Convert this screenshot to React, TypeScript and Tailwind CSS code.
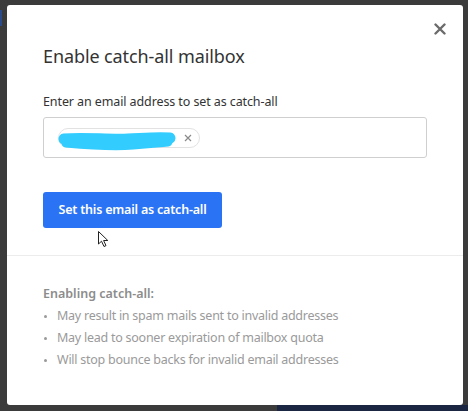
import React from "react";

export default function App() {
  const font = { fontFamily: '"Noto Sans", "Open Sans", sans-serif' };
  return (
    <div className="relative h-[411px] w-[468px] overflow-hidden bg-[#3b3b3b]" style={font}>
      <div className="absolute left-0 top-[10px] h-[16px] w-[2px] bg-[#2a4a8a]" />
      <div className="absolute bottom-0 left-[277px] h-[6px] w-[191px] bg-[#1b2742]" />
      <div className="absolute left-[7px] top-[5px] flex h-[400px] w-[456px] flex-col rounded-[3px] bg-white">
        <button className="absolute right-[17px] top-[18px] flex h-[12px] w-[12px] items-center justify-center text-[#6b6b6b]">
          <svg width="12" height="12" viewBox="0 0 12 12">
            <path d="M1.5 1.5 L10.5 10.5 M10.5 1.5 L1.5 10.5" stroke="currentColor" strokeWidth="2.4" strokeLinecap="round" />
          </svg>
        </button>
        <div className="border-b border-[#ececec] px-[36px] pb-[27px] pt-[39px]">
          <h2 className="text-[18px] leading-[24px] tracking-[-0.1px] text-[#333]">Enable catch-all mailbox</h2>
          <div className="mt-[25px] text-[12.5px] leading-[18px] tracking-[-0.1px] text-[#333]">
            Enter an email address to set as catch-all
          </div>
          <div className="mt-[6px] flex h-[41px] w-[384px] items-center rounded-[3px] border border-[#cfcfcf] pl-[14px]">
            <div className="relative flex h-[20px] w-[142px] items-center rounded-full border border-[#e2e2e2]">
              <svg className="absolute left-[-1px] top-[2px]" width="120" height="20" viewBox="0 0 120 20">
                <path d="M6 8 C 25 6, 50 9, 70 8 S 100 6, 112 7" stroke="#33ccff" strokeWidth="11" strokeLinecap="round" fill="none" />
                <path d="M8 12 C 30 14, 55 16, 75 14 S 100 12, 110 11" stroke="#33ccff" strokeWidth="9" strokeLinecap="round" fill="none" />
              </svg>
              <svg className="absolute left-[125px] top-[5px]" width="8" height="8" viewBox="0 0 8 8">
                <path d="M1 1 L7 7 M7 1 L1 7" stroke="#8a8a8a" strokeWidth="1.2" />
              </svg>
            </div>
          </div>
          <button className="mt-[34px] flex h-[36px] w-[179px] items-center justify-center rounded-[3px] bg-[#2a73f4] text-[12.5px] font-semibold tracking-[-0.2px] text-white">
            Set this email as catch-all
          </button>
        </div>
        <div className="px-[36px] pt-[27px] text-[12px] leading-[22px] text-[#9a9a9a]">
          <div className="text-[12.5px] font-semibold text-[#8c8c8c]">Enabling catch-all:</div>
          <ul>
            {[
              "May result in spam mails sent to invalid addresses",
              "May lead to sooner expiration of mailbox quota",
              "Will stop bounce backs for invalid email addresses",
            ].map((t) => (
              <li key={t} className="flex items-center text-[12.5px] tracking-[-0.25px]">
                <span className="ml-[1px] mr-[10px] h-[3px] w-[3px] rounded-full bg-[#9a9a9a]" />
                {t}
              </li>
            ))}
          </ul>
        </div>
      </div>
      <svg className="absolute left-[98px] top-[231px]" width="12" height="17" viewBox="0 0 12 17">
        <path d="M0.5 0.5 L0.5 13 L3.5 10.2 L6 15.5 L8 14.6 L5.6 9.5 L9.8 9.5 Z" fill="white" stroke="#222" strokeWidth="1" strokeLinejoin="round" />
      </svg>
    </div>
  );
}
